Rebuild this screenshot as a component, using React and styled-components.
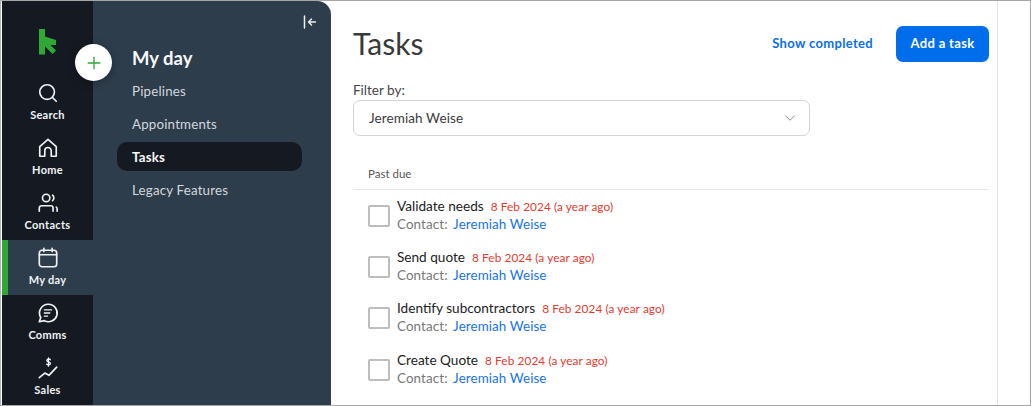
import React from "react";
import styled, { createGlobalStyle } from "styled-components";
import { Search, ChevronDown, Plus } from "lucide-react";

const GlobalStyle = createGlobalStyle`
  html, body {
    margin: 0;
    padding: 0;
    background: #fff;
    overflow: hidden;
  }
  * {
    box-sizing: border-box;
  }
`;

const Frame = styled.div`
  position: relative;
  display: flex;
  width: 1031px;
  height: 406px;
  overflow: hidden;
  background: #fff;
  border: 1px solid #a6a6a6;
  border-left-color: #b4b4b4;
  padding-left: 1px;
  font-family: Lato, "Liberation Sans", sans-serif;
`;

const Rail = styled.nav`
  flex: 0 0 91px;
  display: flex;
  flex-direction: column;
  background: #151a22;
`;

const LogoSlot = styled.div`
  height: 74px;
  padding: 28px 0 0 37px;
`;

const RailItem = styled.a`
  height: 55px;
  flex: 0 0 55px;
  display: flex;
  flex-direction: column;
  align-items: center;
  padding-top: 7px;
  gap: 4px;
  color: #f0f2f4;
  font-size: 11px;
  font-weight: 700;
  letter-spacing: 0.3px;
  line-height: 13px;
  background: ${(p) => (p.$active ? "#2e3d4c" : "transparent")};
  border-left: 6px solid ${(p) => (p.$active ? "#2fa836" : "transparent")};
  & > svg {
    margin-left: -6px;
    display: block;
  }
  & > span {
    margin-left: -6px;
  }
`;

const SubPanel = styled.aside`
  flex: 0 0 238px;
  background: #2e3d4c;
  border-top-right-radius: 14px;
  padding: 46px 29px 0 24px;
  position: relative;
  display: flex;
  flex-direction: column;
`;

const CollapseButton = styled.span`
  position: absolute;
  top: 14px;
  right: 14px;
  color: #eef0f2;
  display: flex;
`;

const PanelTitle = styled.h2`
  margin: 0 0 6px 15px;
  font-size: 18.5px;
  line-height: 23px;
  font-weight: 700;
  color: #f7f8f9;
`;

const PanelLink = styled.a`
  height: 29px;
  margin-bottom: 4px;
  padding-left: 15px;
  display: flex;
  align-items: center;
  border-radius: 10px;
  font-size: 13.3px;
  letter-spacing: 0.2px;
  font-weight: ${(p) => (p.$active ? 700 : 400)};
  color: ${(p) => (p.$active ? "#f7f8f9" : "#d3d8dd")};
  background: ${(p) => (p.$active ? "#151a22" : "transparent")};
`;

const AddCircle = styled.button`
  position: absolute;
  left: 74px;
  top: 43px;
  width: 37px;
  height: 37px;
  padding: 0;
  border: 0;
  border-radius: 50%;
  background: #fff;
  color: #2fa836;
  display: flex;
  align-items: center;
  justify-content: center;
  box-shadow: 0 2px 8px rgba(0, 0, 0, 0.35);
`;

const Main = styled.main`
  flex: 0 0 667px;
  border-right: 1px solid #e3e3e3;
  padding: 25px 8px 0 22px;
  display: flex;
  flex-direction: column;
`;

const Header = styled.header`
  display: flex;
  align-items: center;
  justify-content: space-between;
  height: 36px;
`;

const Title = styled.h1`
  margin: -3px 0 0;
  font-size: 30px;
  font-weight: 400;
  color: #3a3a3a;
  line-height: 36px;
`;

const Actions = styled.div`
  display: flex;
  align-items: center;
  gap: 23px;
`;

const TextButton = styled.a`
  margin-top: -2px;
  color: #0a6fea;
  font-size: 13px;
  font-weight: 700;
  letter-spacing: 0.33px;
`;

const PrimaryButton = styled.button`
  width: 93px;
  height: 36px;
  border: 0;
  border-radius: 7px;
  padding: 0 0 2px;
  background: #006eeb;
  color: #fff;
  font-family: inherit;
  font-size: 13px;
  font-weight: 700;
  letter-spacing: 0.33px;
`;

const FilterLabel = styled.label`
  display: block;
  margin-top: 20px;
  font-size: 13.5px;
  line-height: 17px;
  color: #444;
`;

const Select = styled.div`
  width: 457px;
  height: 36px;
  margin-top: 1px;
  border: 1px solid #d4d4d4;
  border-radius: 7px;
  padding: 0 10px 0 15px;
  display: flex;
  align-items: center;
  justify-content: space-between;
  font-size: 13.5px;
  color: #3b3b3b;
  letter-spacing: 0.1px;
`;

const SectionHead = styled.div`
  margin-top: 30px;
  padding: 0 0 7px 15px;
  border-bottom: 1px solid #e8e8e8;
  font-size: 11.5px;
  line-height: 16px;
  color: #555;
`;

const TaskList = styled.ul`
  list-style: none;
  margin: 8px 0 0;
  padding: 0 0 0 15px;
`;

const Task = styled.li`
  height: 51.2px;
  display: flex;
  align-items: flex-start;
  gap: 7px;
`;

const Checkbox = styled.span`
  flex: 0 0 22px;
  width: 22px;
  height: 22px;
  margin-top: 7px;
  border: 2px solid #bdbdbd;
  border-radius: 2px;
`;

const TaskBody = styled.div`
  display: flex;
  flex-direction: column;
  gap: 1px;
`;

const TaskLine = styled.div`
  display: flex;
  align-items: baseline;
  gap: 7px;
  font-size: 13.6px;
  line-height: 17px;
  color: #222;
`;

const DueDate = styled.span`
  font-size: 11.8px;
  color: #e8382c;
  letter-spacing: 0.1px;
`;

const Contact = styled.div`
  font-size: 13.4px;
  line-height: 17px;
  color: #777;
  letter-spacing: 0.1px;
  & > a {
    color: #1a73e8;
    margin-left: 2px;
  }
`;

const iconProps = {
  width: 22,
  height: 22,
  viewBox: "0 0 24 24",
  fill: "none",
  stroke: "currentColor",
  strokeWidth: 1.8,
  strokeLinecap: "round",
  strokeLinejoin: "round",
};

const HomeIcon = () => (
  <svg {...iconProps}>
    <path d="M3 21V10.500L12 2.500l9 8V21h-5.500v-6a3.500 3.500 0 0 0-7 0v6H3z" />
  </svg>
);

const ContactsIcon = () => (
  <svg {...iconProps}>
    <circle cx="10" cy="6.500" r="4" />
    <path d="M17 3.500a4 4 0 0 1 0 6" />
    <path d="M2.500 21v-3.500a2.500 2.500 0 0 1 2.500-2.500h10a2.500 2.500 0 0 1 2.500 2.500V21" />
    <path d="M21 16.500c.8.400 1 1 1 2V21" />
  </svg>
);

const CalendarIcon = () => (
  <svg {...iconProps}>
    <rect x="2.500" y="3.500" width="19" height="18" rx="3" />
    <path d="M2.500 8.500h19M7.500 1.500v3.500M16.500 1.500v3.500" />
  </svg>
);

const CommsIcon = () => (
  <svg {...iconProps}>
    <path d="M12.500 2.500a9.500 9.500 0 1 1-4.600 17.800L2.500 21.500l1.600-4.600A9.500 9.500 0 0 1 12.500 2.500z" />
    <path d="M8 8.500h8M8 12h6M8 15.500h3.500" strokeWidth="1.400" />
  </svg>
);

const SalesIcon = () => (
  <svg {...iconProps}>
    <path d="M2.500 22.500l6-5 4.500 2.500 8.500-9" />
    <path d="M14.500 3c-.5-1-3.500-1.200-3.800.6-.3 2 4 1.600 3.900 3.700-.1 1.700-3.300 1.700-4.100.5M12.500 1v9" strokeWidth="1.500" />
  </svg>
);

const CollapseIcon = () => (
  <svg width="14" height="14" viewBox="0 0 14 14" fill="none" stroke="currentColor" strokeLinecap="round" strokeLinejoin="round">
    <path d="M1.500 1v12" strokeWidth="1.500" />
    <path d="M12.500 7H5.500M8.500 4L5.500 7l3 3" strokeWidth="1.400" />
  </svg>
);

const LogoK = () => (
  <svg width="18" height="26" viewBox="0 0 18 26">
    <path fill="#2fa836" d="M0 0h6v7.500L17 11v5h-5.500l5.500 5.500-3.500 3.500L6 17.500V25.500H0z" />
  </svg>
);

const railItems = [
  { label: "Search", icon: <Search size={22} strokeWidth={1.8} /> },
  { label: "Home", icon: <HomeIcon /> },
  { label: "Contacts", icon: <ContactsIcon /> },
  { label: "My day", icon: <CalendarIcon />, active: true },
  { label: "Comms", icon: <CommsIcon /> },
  { label: "Sales", icon: <SalesIcon /> },
];

const panelLinks = ["Pipelines", "Appointments", "Tasks", "Legacy Features"];

const tasks = ["Validate needs", "Send quote", "Identify subcontractors", "Create Quote"];

export default function App() {
  return (
    <Frame>
      <GlobalStyle />
      <Rail>
        <LogoSlot>
          <LogoK />
        </LogoSlot>
        {railItems.map((item) => (
          <RailItem key={item.label} $active={item.active}>
            {item.icon}
            <span>{item.label}</span>
          </RailItem>
        ))}
      </Rail>
      <SubPanel>
        <CollapseButton>
          <CollapseIcon />
        </CollapseButton>
        <PanelTitle>My day</PanelTitle>
        {panelLinks.map((link) => (
          <PanelLink key={link} $active={link === "Tasks"}>
            {link}
          </PanelLink>
        ))}
      </SubPanel>
      <AddCircle aria-label="Add">
        <Plus size={20} strokeWidth={1.6} />
      </AddCircle>
      <Main>
        <Header>
          <Title>Tasks</Title>
          <Actions>
            <TextButton>Show completed</TextButton>
            <PrimaryButton>Add a task</PrimaryButton>
          </Actions>
        </Header>
        <FilterLabel>Filter by:</FilterLabel>
        <Select>
          Jeremiah Weise
          <ChevronDown size={18} strokeWidth={1.3} color="#888" />
        </Select>
        <SectionHead>Past due</SectionHead>
        <TaskList>
          {tasks.map((task) => (
            <Task key={task}>
              <Checkbox />
              <TaskBody>
                <TaskLine>
                  {task}
                  <DueDate>8 Feb 2024 (a year ago)</DueDate>
                </TaskLine>
                <Contact>
                  Contact: <a>Jeremiah Weise</a>
                </Contact>
              </TaskBody>
            </Task>
          ))}
        </TaskList>
      </Main>
    </Frame>
  );
}
